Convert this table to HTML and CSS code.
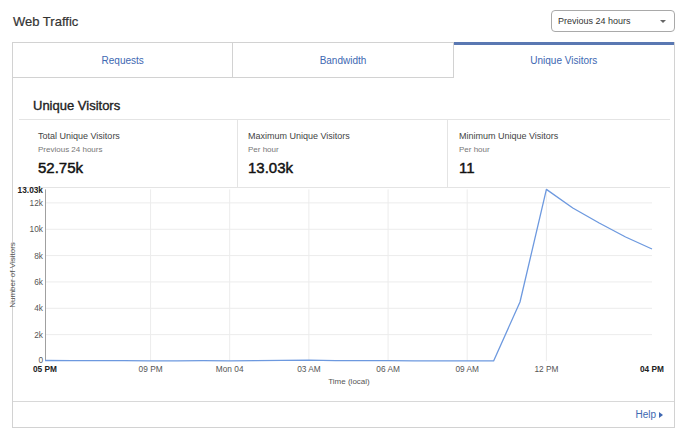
FILE: index.html
```html
<!DOCTYPE html>
<html>
<head>
<meta charset="utf-8">
<link rel="stylesheet" href="styles.css">
</head>
<body>
<div class="page">
  <header class="top">
    <h1 class="title">Web Traffic</h1>
    <div class="select"><span>Previous 24 hours</span><i class="caret"></i></div>
  </header>
  <section class="card">
    <nav class="tabs">
      <div class="tab">Requests</div>
      <div class="tab">Bandwidth</div>
      <div class="tab active">Unique Visitors</div>
    </nav>
    <div class="panel">
      <h2 class="panel-title">Unique Visitors</h2>
      <div class="stats">
        <div class="stat first">
          <div class="stat-label">Total Unique Visitors</div>
          <div class="stat-sub">Previous 24 hours</div>
          <div class="stat-value">52.75k</div>
        </div>
        <div class="stat">
          <div class="stat-label">Maximum Unique Visitors</div>
          <div class="stat-sub">Per hour</div>
          <div class="stat-value">13.03k</div>
        </div>
        <div class="stat last">
          <div class="stat-label">Minimum Unique Visitors</div>
          <div class="stat-sub">Per hour</div>
          <div class="stat-value">11</div>
        </div>
      </div>
    </div>
    <svg class="chart" width="661" height="213" viewBox="0 0 661 213">
      <g class="grid">
        <line x1="32" y1="14.9" x2="639" y2="14.9"/>
        <line x1="32" y1="41.25" x2="639" y2="41.25"/>
        <line x1="32" y1="67.6" x2="639" y2="67.6"/>
        <line x1="32" y1="93.95" x2="639" y2="93.95"/>
        <line x1="32" y1="120.3" x2="639" y2="120.3"/>
        <line x1="32" y1="146.65" x2="639" y2="146.65"/>
        <line x1="137.6" y1="1.4" x2="137.6" y2="173"/>
        <line x1="216.7" y1="1.4" x2="216.7" y2="173"/>
        <line x1="295.9" y1="1.4" x2="295.9" y2="173"/>
        <line x1="375.1" y1="1.4" x2="375.1" y2="173"/>
        <line x1="454.2" y1="1.4" x2="454.2" y2="173"/>
        <line x1="533.4" y1="1.4" x2="533.4" y2="173"/>
      </g>
      <line class="axis" x1="32.5" y1="1.4" x2="32.5" y2="173"/>
      <g class="ylabels">
        <text class="strong" x="30" y="4.6">13.03k</text>
        <text x="30" y="17.9">12k</text>
        <text x="30" y="44.2">10k</text>
        <text x="30" y="70.6">8k</text>
        <text x="30" y="96.9">6k</text>
        <text x="30" y="123.3">4k</text>
        <text x="30" y="149.6">2k</text>
        <text x="30" y="175.3">0</text>
      </g>
      <g class="xlabels">
        <text class="strong" x="32" y="184">05 PM</text>
        <text x="137.6" y="184">09 PM</text>
        <text x="216.7" y="184">Mon 04</text>
        <text x="295.9" y="184">03 AM</text>
        <text x="375.1" y="184">06 AM</text>
        <text x="454.2" y="184">09 AM</text>
        <text x="533.4" y="184">12 PM</text>
        <text class="strong" x="639" y="184">04 PM</text>
      </g>
      <text class="axis-title" x="336" y="196">Time (local)</text>
      <text class="axis-title" transform="translate(-1 87) rotate(-90)" x="0" y="3">Number of Visitors</text>
      <polyline class="series" points="32,172.5 58.4,172.6 84.8,172.7 111.2,172.7 137.6,172.8 164,172.8 190.3,172.7 216.7,172.8 243.1,172.6 269.5,172.4 295.9,172.1 322.3,172.6 348.7,172.7 375.1,172.7 401.5,172.8 427.9,172.8 454.2,172.8 480.6,172.9 507,114 533.4,1.4 559.8,20 586.2,35 612.6,49 639,61"/>
    </svg>
    <footer class="card-foot">
      <a class="help">Help<i class="help-arrow"></i></a>
    </footer>
  </section>
</div>
</body>
</html>
```

FILE: styles.css
```css
* { box-sizing: border-box; }
html, body {
  margin: 0;
  padding: 0;
  background: #fff;
}
body {
  font-family: "Liberation Sans", Arial, Helvetica, sans-serif;
  color: #333;
}
.page {
  width: 680px;
  padding: 0 5px 0 12px;
}
.top {
  height: 42px;
  display: flex;
  align-items: center;
  justify-content: space-between;
}
.title {
  margin: 0 0 0 1px;
  font-size: 13px;
  font-weight: normal;
  color: #333;
  -webkit-text-stroke: 0.2px #333;
}
.select {
  width: 124px;
  height: 22px;
  border: 1px solid #a9a9a9;
  border-radius: 4px;
  display: flex;
  align-items: center;
  justify-content: space-between;
  padding: 0 8px 0 6px;
  font-size: 9px;
  color: #333;
}
.caret {
  width: 0;
  height: 0;
  border-left: 3px solid transparent;
  border-right: 3px solid transparent;
  border-top: 3px solid #666;
}
.card {
  width: 663px;
  border: 1px solid #d2d2d2;
  border-top: none;
}
.tabs {
  display: grid;
  grid-template-columns: 1fr 1fr 1fr;
  height: 36px;
}
.tab {
  display: flex;
  align-items: center;
  justify-content: center;
  font-size: 10px;
  color: #4068b2;
  border-top: 1px solid #d2d2d2;
  border-bottom: 1px solid #d2d2d2;
  border-right: 1px solid #d2d2d2;
}
.tab.active {
  border-top: 3px solid #5a78b2;
  border-bottom: none;
  border-right: none;
  padding-bottom: 2px;
}
.panel {
  padding: 0 4px 0 6px;
}
.panel-title {
  margin: 0;
  height: 42px;
  padding: 20px 0 0 14px;
  font-size: 13px;
  line-height: 16px;
  font-weight: normal;
  color: #222;
  -webkit-text-stroke: 0.35px #222;
  border-bottom: 1px solid #e4e4e4;
}
.stats {
  display: grid;
  grid-template-columns: 219px 210px 1fr;
  height: 68px;
  border-bottom: 1px solid #e4e4e4;
}
.stat {
  padding: 11px 0 0 10px;
  border-right: 1px solid #e4e4e4;
}
.stat.first { padding-left: 19px; }
.stat.last { border-right: none; padding-left: 11px; }
.stat-label {
  font-size: 9px;
  line-height: 11px;
  color: #444;
}
.stat-sub {
  margin-top: 3px;
  font-size: 8px;
  line-height: 10px;
  color: #777;
}
.stat-value {
  margin-top: 4px;
  font-size: 15px;
  line-height: 18px;
  color: #111;
  -webkit-text-stroke: 0.45px #111;
}
.chart {
  display: block;
  overflow: visible;
  font-family: "Liberation Sans", Arial, Helvetica, sans-serif;
}
.grid line {
  stroke: #ececec;
  stroke-width: 1;
}
.axis {
  stroke: #a0a0a0;
  stroke-width: 1;
}
.ylabels text {
  font-size: 8.3px;
  fill: #555;
  text-anchor: end;
}
.xlabels text {
  font-size: 8.3px;
  fill: #555;
  text-anchor: middle;
}
.ylabels .strong, .xlabels .strong {
  fill: #222;
  font-weight: bold;
}
.axis-title {
  font-size: 8px;
  fill: #555;
  text-anchor: middle;
}
.series {
  fill: none;
  stroke: #6d99df;
  stroke-width: 1.3;
  stroke-linejoin: round;
}
.card-foot {
  height: 26px;
  border-top: 1px solid #d8d8d8;
  display: flex;
  align-items: center;
  justify-content: flex-end;
  padding-right: 11px;
}
.help {
  display: flex;
  align-items: center;
  font-size: 10px;
  color: #4068b2;
}
.help-arrow {
  width: 0;
  height: 0;
  margin-left: 3px;
  border-top: 3.5px solid transparent;
  border-bottom: 3.5px solid transparent;
  border-left: 4px solid #4068b2;
}
```
